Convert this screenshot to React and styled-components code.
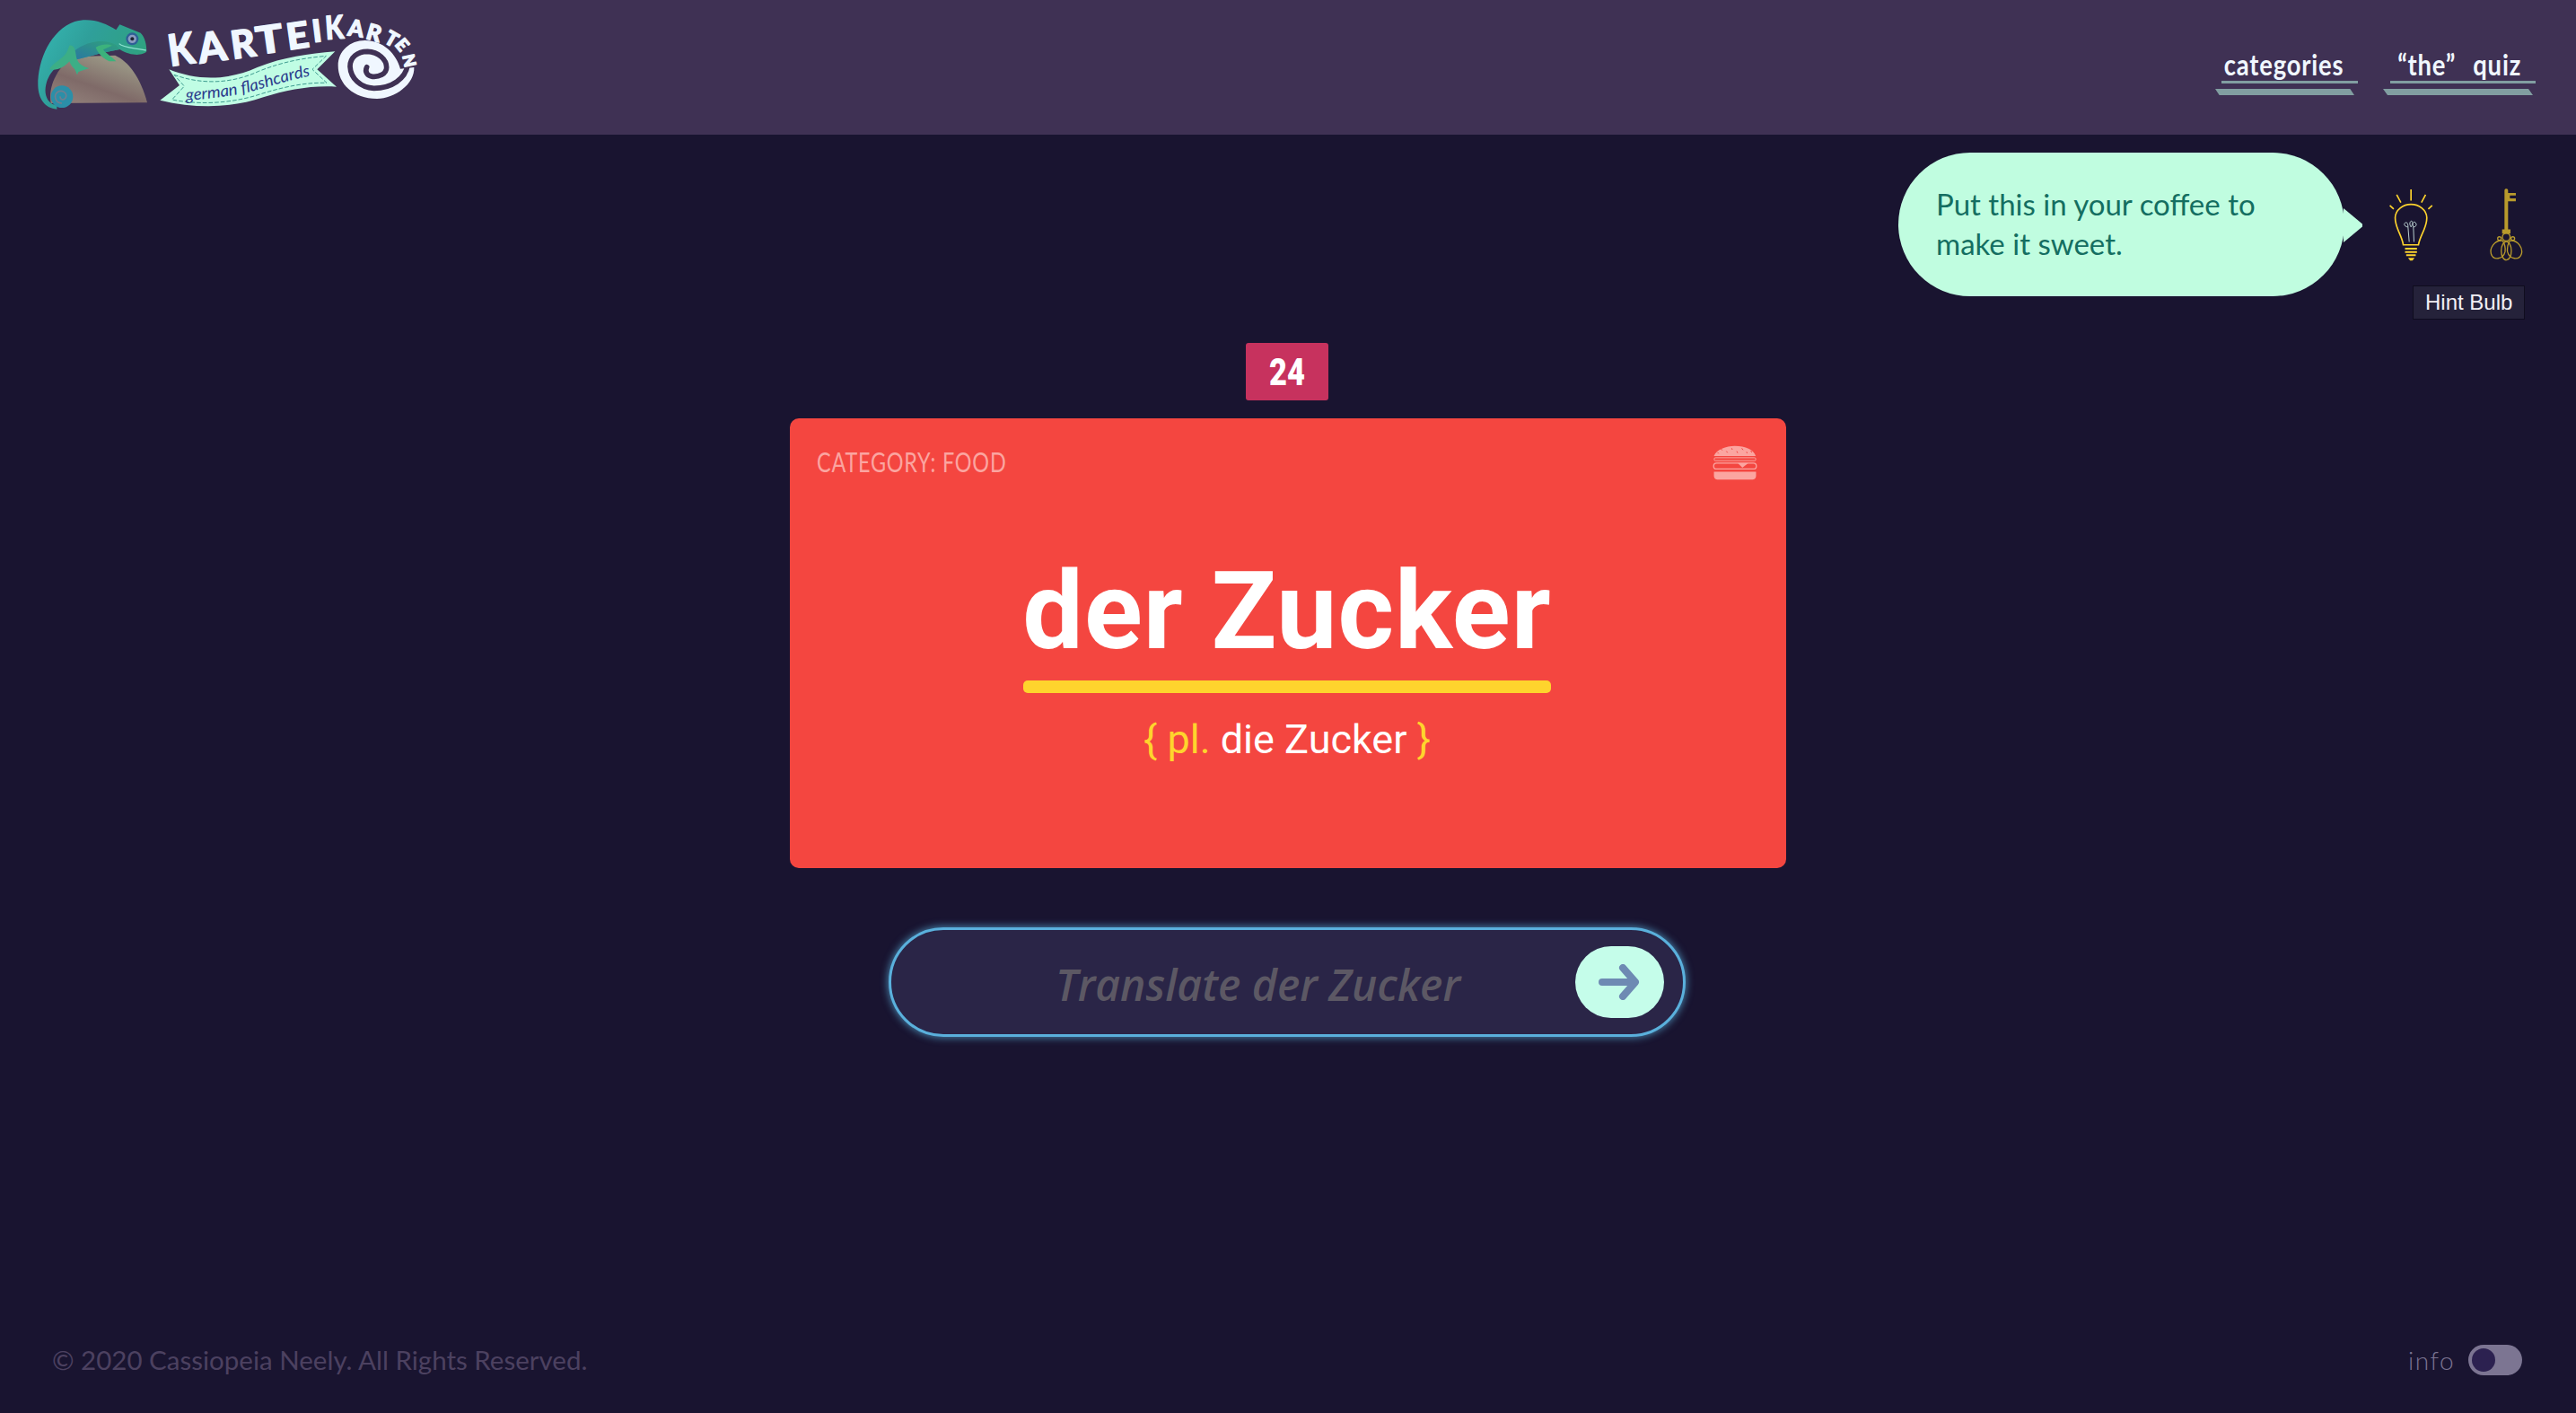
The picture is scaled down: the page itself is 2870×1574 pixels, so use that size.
import React from 'react';
import styled, { createGlobalStyle } from 'styled-components';

const GlobalStyle = createGlobalStyle`
    html, body {
        margin: 0;
        padding: 0;
        background-color: #191430;
    }
`

const logoLetters = [
    { ch: 'K', x: 569, y: 222, rot: -8, size: 146, sx: 0.86 },
    { ch: 'A', x: 668, y: 212, rot: -8, size: 138, sx: 0.98 },
    { ch: 'R', x: 778, y: 198, rot: -8, size: 130, sx: 0.98 },
    { ch: 'T', x: 862, y: 183, rot: -8, size: 128, sx: 1.18 },
    { ch: 'E', x: 963, y: 167, rot: -8, size: 122, sx: 1.08 },
    { ch: 'I', x: 1048, y: 142, rot: -7, size: 104, sx: 1 },
    { ch: 'K', x: 1090, y: 132, rot: -4, size: 108, sx: 0.82 },
    { ch: 'A', x: 1160, y: 118, rot: 8, size: 76, sx: 0.98 },
    { ch: 'R', x: 1220, y: 128, rot: 16, size: 74, sx: 1 },
    { ch: 'T', x: 1280, y: 140, rot: 30, size: 66, sx: 1 },
    { ch: 'E', x: 1318, y: 150, rot: 50, size: 58, sx: 1 },
    { ch: 'N', x: 1345, y: 186, rot: 78, size: 54, sx: 1 },
];

const Logo = () => (
    <LogoSvg viewBox="0 0 1560 450">
        <defs>
            <linearGradient id="rock" x1="0.2" y1="0.9" x2="0.7" y2="0.2">
                <stop offset="0" stopColor="#8d7b76" />
                <stop offset="0.4" stopColor="#7f6a68" />
                <stop offset="1" stopColor="#979282" />
            </linearGradient>
            <linearGradient id="skin" x1="0" y1="0" x2="1" y2="0.5">
                <stop offset="0" stopColor="#36b8b4" />
                <stop offset="0.45" stopColor="#2f9f9a" />
                <stop offset="1" stopColor="#2fa27c" />
            </linearGradient>
            <linearGradient id="belly" x1="0" y1="1" x2="1" y2="0">
                <stop offset="0" stopColor="#2a6fa8" />
                <stop offset="1" stopColor="#2fa27c" />
            </linearGradient>
        </defs>
        {/* rock */}
        <path d="M170 345 L492 343 C470 260 430 205 385 185 L240 190 C190 230 160 290 170 345 Z" fill="url(#rock)" />
        {/* body and tail */}
        <path d="M190 365 C150 362 128 330 127 285 C126 200 170 100 250 72 C300 58 350 75 388 100 L400 82 L470 110 C485 125 490 150 490 172 C480 185 440 190 400 165 C340 175 280 195 215 208 C180 225 150 260 152 310 C155 335 170 350 190 352 Z" fill="url(#skin)" />
        <path d="M215 208 C250 150 330 120 388 150 L400 165 C340 175 280 195 215 208 Z" fill="url(#belly)" />
        <circle cx="207" cy="323" r="37" fill="#2b8fa8" />
        <path d="M207 345 C185 345 178 320 192 308 C206 298 226 310 220 326 C214 338 198 332 202 322" fill="none" stroke="#6f7f90" strokeWidth="5" />
        {/* legs */}
        <path d="M232 152 C250 150 252 170 255 190 C258 205 268 222 298 228 L262 240 L258 250 L250 232 C240 222 235 215 232 205 C215 225 190 238 165 232 C175 210 215 195 225 170 Z" fill="#3cae86" />
        <path d="M320 158 C340 145 365 148 375 152 L345 166 C355 180 375 190 388 205 L365 205 C345 195 328 180 320 158 Z" fill="#3cb27c" />
        {/* eye and mouth */}
        <circle cx="442" cy="130" r="21" fill="#2f5f96" />
        <circle cx="442" cy="130" r="14" fill="#8a9cc0" />
        <circle cx="442" cy="130" r="6" fill="#1f2430" />
        <path d="M398 146 C410 160 450 160 488 168" fill="none" stroke="#8fe3d2" strokeWidth="4" />

        {/* spiral */}
        <path d="M1384 225 C1387 280 1320 330 1260 330 C1180 330 1130 280 1130 220 C1130 170 1170 135 1220 135 C1280 135 1325 180 1338 230 Z" fill="#f0f7ff" />
        <path d="M1362 220 C1355 262 1310 295 1250 295 C1205 293 1172 262 1170 222 C1170 192 1195 172 1228 172 C1265 174 1292 198 1292 225 C1292 248 1265 258 1245 256 C1228 254 1218 240 1226 224" fill="none" stroke="#3f3154" strokeWidth="17" strokeLinecap="round" />

        {/* wordmark */}
        {logoLetters.map((l, i) => (
            <LogoLetter key={i} transform={`translate(${l.x} ${l.y}) rotate(${l.rot}) scale(${l.sx} 1)`} fontSize={l.size}>{l.ch}</LogoLetter>
        ))}

        {/* banner */}
        <path d="M565 232 C660 270 760 270 860 225 C950 190 1030 180 1120 172 L1060 232 L1125 290 C1040 285 960 300 880 325 C780 360 660 365 535 335 L600 285 Z" fill="#c0fde4" />
        <path d="M582 250 C670 282 770 282 865 238 C950 205 1010 195 1090 187 L1044 232 L1092 277 C1020 275 950 290 875 313 C780 345 670 352 575 333 L616 288 Z" fill="none" stroke="#3e9c90" strokeWidth="3" strokeDasharray="14 6" />
        <path id="bannerLine" d="M622 336 C700 330 770 322 830 308 C900 290 970 265 1046 252" fill="none" />
        <BannerText>
            <textPath href="#bannerLine" textLength="425" lengthAdjust="spacingAndGlyphs">german flashcards</textPath>
        </BannerText>
    </LogoSvg>
)

const Bulb = () => (
    <BulbSvg viewBox="60 40 155 250">
        <g fill="none" stroke="#fdd32d" strokeWidth="5">
            <path d="M138 46 V84 M90 64 L104 90 M187 64 L173 90 M67 100 L80 112 M209 100 L196 112" />
            <path d="M112 232 C108 200 84 175 85 140 C86 115 110 96 138 96 C166 96 190 115 191 140 C192 175 168 200 163 232 Z" />
            <path d="M118 245 H158 M118 256 H158 M122 267 H154" strokeWidth="6" />
        </g>
        <path d="M128 276 H150 L143 285 H135 Z" fill="#fdd32d" />
        <g fill="none" stroke="#b9cfd0" strokeWidth="3">
            <path d="M132 222 L128 172 C118 172 110 162 120 157 C128 156 128 166 128 172 M148 222 L146 172 C156 172 160 162 150 155 C142 156 144 166 146 172 M138 172 C130 160 136 152 140 152 C146 156 142 166 138 172" />
        </g>
    </BulbSvg>
)

const Key = () => (
    <KeySvg viewBox="395 40 120 250">
        <path d="M450 50 C450 42 462 42 462 50 V58 H488 V66 H468 V76 H488 V86 H462 V180 H470 V194 H442 V180 H450 Z" fill="#b89a2c" />
        <g fill="none" stroke="#b89a2c" strokeWidth="4">
            <circle cx="456" cy="206" r="13" />
            <circle cx="433" cy="211" r="6" />
            <circle cx="478" cy="211" r="6" />
            <path d="M444 218 C415 215 400 245 405 262 C412 285 445 282 452 255 C454 240 450 228 444 218 Z" />
            <path d="M468 218 C497 215 512 245 507 262 C500 285 467 282 460 255 C458 240 462 228 468 218 Z" />
            <ellipse cx="456" cy="252" rx="17" ry="31" />
        </g>
    </KeySvg>
)

const Burger = () => (
    <BurgerSvg viewBox="84 46 150 118">
        <path d="M88 82 C95 60 130 48 158 48 C195 48 222 60 229 82 Z" fill="#fba5a0" />
        <path d="M112 58 L116 63 M130 66 L134 71 M148 56 L150 61 M165 66 L168 72 M182 56 L186 62 M198 68 L200 73 M212 64 L216 70 M100 70 L104 74" stroke="#f44640" strokeWidth="3" />
        <rect x="89" y="88" width="140" height="10" rx="4" fill="none" stroke="#fba5a0" strokeWidth="3" />
        <rect x="87" y="106" width="144" height="20" rx="10" fill="none" stroke="#fba5a0" strokeWidth="4" />
        <path d="M168 106 H204 L184 122 Z" fill="#fba5a0" />
        <path d="M88 135 H230 V148 C230 158 224 162 216 162 H102 C94 162 88 158 88 148 Z" fill="#fba5a0" />
    </BurgerSvg>
)

const App = () => {
    return (
        <Page>
            <GlobalStyle />
            <Header>
                <Logo />
                <Nav>
                    <NavItem $width={159}>
                        <NavLabel $nudge={6}>categories</NavLabel>
                        <NavThin $width={152} />
                        <NavThick $width={155} />
                    </NavItem>
                    <NavItem $width={170}>
                        <NavLabel>“the” quiz</NavLabel>
                        <NavThin $width={162} />
                        <NavThick $width={167} />
                    </NavItem>
                </Nav>
            </Header>

            <HintRow>
                <Bubble>Put this in your coffee to make it sweet.</Bubble>
                <HintIcon>
                    <Bulb />
                    <Tooltip>Hint Bulb</Tooltip>
                </HintIcon>
                <HintIcon $gap={60}>
                    <Key />
                </HintIcon>
            </HintRow>

            <Main>
                <Counter>
                    <CounterText>24</CounterText>
                </Counter>
                <Card>
                    <CardTop>
                        <Category>CATEGORY: FOOD</Category>
                        <Burger />
                    </CardTop>
                    <Word>der Zucker</Word>
                    <WordLine />
                    <Plural>
                        <Yellow>{'{ pl.'}</Yellow> die Zucker <Yellow>{'}'}</Yellow>
                    </Plural>
                </Card>
                <AnswerBox>
                    <AnswerInput placeholder="Translate der Zucker" />
                    <SubmitButton>
                        <svg width="46" height="40" viewBox="0 0 46 40">
                            <path d="M4 20 H40 M27 4 L41 20 L27 36" fill="none" stroke="#6e8ab3" strokeWidth="8" strokeLinecap="round" strokeLinejoin="round" />
                        </svg>
                    </SubmitButton>
                </AnswerBox>
            </Main>

            <Footer>
                <Copyright>© 2020 Cassiopeia Neely. All Rights Reserved.</Copyright>
                <InfoBox>
                    <InfoLabel>info</InfoLabel>
                    <Toggle>
                        <Knob />
                    </Toggle>
                </InfoBox>
            </Footer>
        </Page>
    )
}

export default App;


const Page = styled.div`
    display: flex;
    flex-direction: column;
    min-height: 100vh;
    overflow: hidden;
    background-color: #191430;
    font-family: "Lato", "Open Sans", sans-serif;
`
const Header = styled.header`
    display: flex;
    justify-content: space-between;
    height: 150px;
    background-color: #3f3154;
`
const LogoSvg = styled.svg`
    display: block;
    width: 520px;
    height: 150px;
`
const LogoLetter = styled.text`
    font-family: "Lato", sans-serif;
    font-weight: 900;
    fill: #f0f7ff;
    stroke: #f0f7ff;
    stroke-width: 4px;
    stroke-linejoin: round;
`
const BannerText = styled.text`
    font-family: "Lato", sans-serif;
    font-style: italic;
    font-size: 54px;
    fill: #2b3a8c;
`
const Nav = styled.nav`
    display: flex;
    gap: 28px;
    padding: 53px 45px 0 0;
`
const NavItem = styled.div`
    display: flex;
    flex-direction: column;
    align-items: center;
    width: ${(props) => props.$width}px;
`
const NavLabel = styled.div`
    position: relative;
    z-index: 1;
    height: 37px;
    margin-right: ${(props) => props.$nudge || 0}px;
    font-family: "Lato", sans-serif;
    font-size: 33px;
    font-weight: bold;
    line-height: 37px;
    letter-spacing: 1px;
    word-spacing: 14px;
    white-space: nowrap;
    transform: scaleX(0.83);
    color: #f0f7ff;
`
const NavThin = styled.div`
    align-self: flex-end;
    width: ${(props) => props.$width}px;
    height: 3px;
    background-color: #819ea1;
`
const NavThick = styled.div`
    align-self: flex-start;
    width: ${(props) => props.$width}px;
    height: 7px;
    margin-top: 6px;
    background-color: #819ea1;
    clip-path: polygon(0 0, 97% 0, 100% 100%, 3% 100%);
`
const HintRow = styled.section`
    display: flex;
    justify-content: flex-end;
    align-items: center;
    gap: 48px;
    padding: 20px 58px 0 0;
`
const Bubble = styled.div`
    position: relative;
    box-sizing: border-box;
    width: 497px;
    height: 160px;
    padding: 35px 60px 0 42px;
    border-radius: 80px;
    background-color: #c0fde0;
    font-size: 33px;
    line-height: 44px;
    color: #146e61;

    &::after {
        content: "";
        position: absolute;
        top: 62px;
        right: -20px;
        width: 21px;
        height: 38px;
        background-color: #c0fde0;
        clip-path: polygon(0 0, 100% 46%, 100% 54%, 0 100%);
    }
`
const HintIcon = styled.div`
    position: relative;
    margin-left: ${(props) => (props.$gap ? props.$gap - 48 : 0)}px;
`
const BulbSvg = styled.svg`
    display: block;
    width: 52px;
    height: 83px;
`
const KeySvg = styled.svg`
    display: block;
    width: 40px;
    height: 83px;
`
const Tooltip = styled.div`
    position: absolute;
    top: 109px;
    left: 28px;
    padding: 0 13px;
    height: 36px;
    border: 1px solid #0f0c1e;
    background-color: #25223a;
    font-family: "Liberation Sans", sans-serif;
    font-size: 24px;
    line-height: 36px;
    white-space: nowrap;
    color: #f2f0f5;
`
const Main = styled.main`
    display: flex;
    flex-direction: column;
    align-items: center;
    margin-top: 52px;
`
const Counter = styled.div`
    display: flex;
    align-items: center;
    justify-content: center;
    width: 92px;
    height: 64px;
    margin-right: 2px;
    border-radius: 3px;
    background-color: #c7325e;
`
const CounterText = styled.span`
    font-family: "Roboto", sans-serif;
    font-size: 43px;
    font-weight: 900;
    transform: scaleX(0.8);
    color: #ffffff;
`
const Card = styled.div`
    display: flex;
    flex-direction: column;
    align-items: center;
    box-sizing: border-box;
    width: 1110px;
    height: 501px;
    margin-top: 20px;
    padding: 30px 32px 0 30px;
    border-radius: 10px;
    background-color: #f44640;
`
const CardTop = styled.div`
    display: flex;
    justify-content: space-between;
    align-self: stretch;
`
const Category = styled.div`
    font-family: "Lato", sans-serif;
    font-size: 30px;
    line-height: 36px;
    white-space: nowrap;
    letter-spacing: 1px;
    transform: scaleX(0.78);
    transform-origin: left center;
    color: #fba5a0;
`
const BurgerSvg = styled.svg`
    display: block;
    width: 50px;
    height: 39px;
`
const Word = styled.div`
    margin-top: 81px;
    font-family: "Roboto", sans-serif;
    font-size: 120px;
    font-weight: bold;
    line-height: 130px;
    letter-spacing: 1px;
    color: #ffffff;
`
const WordLine = styled.div`
    width: 588px;
    height: 14px;
    margin-top: 12px;
    border-radius: 5px;
    background-color: #fed42d;
`
const Plural = styled.div`
    margin-top: 22px;
    font-family: "Roboto", sans-serif;
    font-size: 45px;
    line-height: 60px;
    color: #ffffff;
`
const Yellow = styled.span`
    color: #fed42d;
`
const AnswerBox = styled.div`
    display: flex;
    align-items: center;
    box-sizing: border-box;
    width: 888px;
    height: 122px;
    margin: 66px 3px 0 0;
    padding-right: 21px;
    border: 3px solid #5ab0dc;
    border-radius: 61px;
    background-color: #2a2547;
    box-shadow: 0 0 8px 1px rgba(90, 176, 220, 0.7);
`
const AnswerInput = styled.input`
    flex: 1;
    min-width: 0;
    padding: 4px 0 0 56px;
    border: none;
    outline: none;
    background: transparent;
    font-family: "Open Sans", sans-serif;
    font-size: 48px;
    font-style: italic;
    font-weight: 600;
    text-align: center;
    color: #ffffff;

    &::placeholder {
        color: #5c5864;
        opacity: 1;
    }
`
const SubmitButton = styled.div`
    display: flex;
    align-items: center;
    justify-content: center;
    width: 99px;
    height: 80px;
    border-radius: 40px;
    background-color: #c5fdea;
`
const Footer = styled.footer`
    display: flex;
    justify-content: space-between;
    align-items: center;
    margin-top: auto;
    padding: 0 60px 42px 58px;
`
const Copyright = styled.div`
    font-size: 29.5px;
    line-height: 34px;
    color: #4c4160;
`
const InfoBox = styled.div`
    display: flex;
    align-items: center;
    gap: 15px;
`
const InfoLabel = styled.div`
    font-size: 28px;
    font-weight: 300;
    letter-spacing: 1.5px;
    color: #7a7390;
`
const Toggle = styled.div`
    display: flex;
    align-items: center;
    box-sizing: border-box;
    width: 60px;
    height: 34px;
    padding-left: 4px;
    border-radius: 17px;
    background-color: #7c7592;
`
const Knob = styled.div`
    width: 26px;
    height: 26px;
    border-radius: 50%;
    background-color: #2c2150;
`
